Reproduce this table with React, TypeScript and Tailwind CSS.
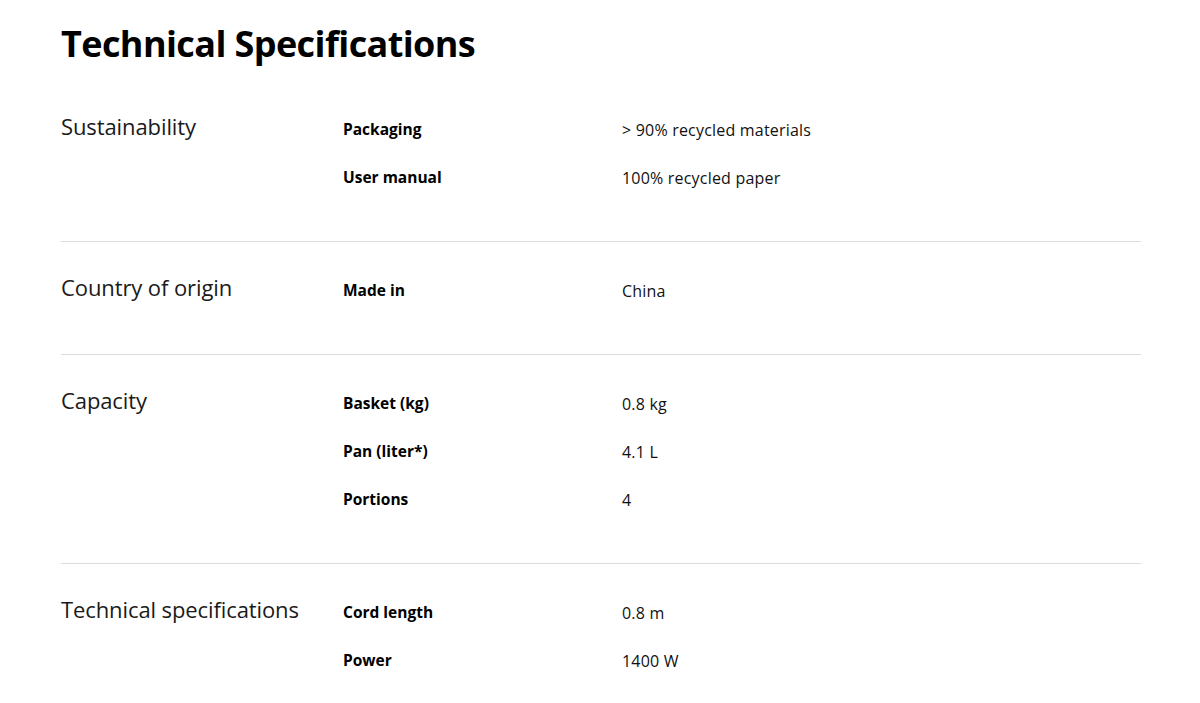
const sections = [
  {
    label: "Sustainability",
    rows: [
      ["Packaging", "> 90% recycled materials"],
      ["User manual", "100% recycled paper"],
    ],
  },
  {
    label: "Country of origin",
    rows: [["Made in", "China"]],
  },
  {
    label: "Capacity",
    rows: [
      ["Basket (kg)", "0.8 kg"],
      ["Pan (liter*)", "4.1 L"],
      ["Portions", "4"],
    ],
  },
  {
    label: "Technical specifications",
    rows: [
      ["Cord length", "0.8 m"],
      ["Power", "1400 W"],
    ],
  },
];

export default function App() {
  return (
    <div className="min-h-screen bg-white px-[61px] text-[#111] font-['Open_Sans',sans-serif]">
      <h1 className="pt-[19px] text-[36px] font-bold leading-[50px] tracking-[-0.6px] text-black">
        Technical Specifications
      </h1>
      <div className="mt-[37px] w-[1080px]">
        {sections.map((section, i) => (
          <div
            key={section.label}
            className={
              i < sections.length - 1
                ? "flex border-b border-[#dcdcdc] pb-[39px]"
                : "flex pb-[39px]"
            }
            style={i > 0 ? { paddingTop: 25 } : undefined}
          >
            <div className="w-[282px] pt-[5px] text-[22px] font-normal leading-[30px] tracking-[-0.1px] text-[#1a1a1a]">
              {section.label}
            </div>
            <div className="flex flex-col">
              {section.rows.map(([key, value]) => (
                <div key={key} className="flex h-[48px] items-center">
                  <div className="w-[279px] text-[15.5px] font-bold text-black">{key}</div>
                  <div className="text-[16px] tracking-[0.2px] text-[#111]">{value}</div>
                </div>
              ))}
            </div>
          </div>
        ))}
      </div>
    </div>
  );
}
